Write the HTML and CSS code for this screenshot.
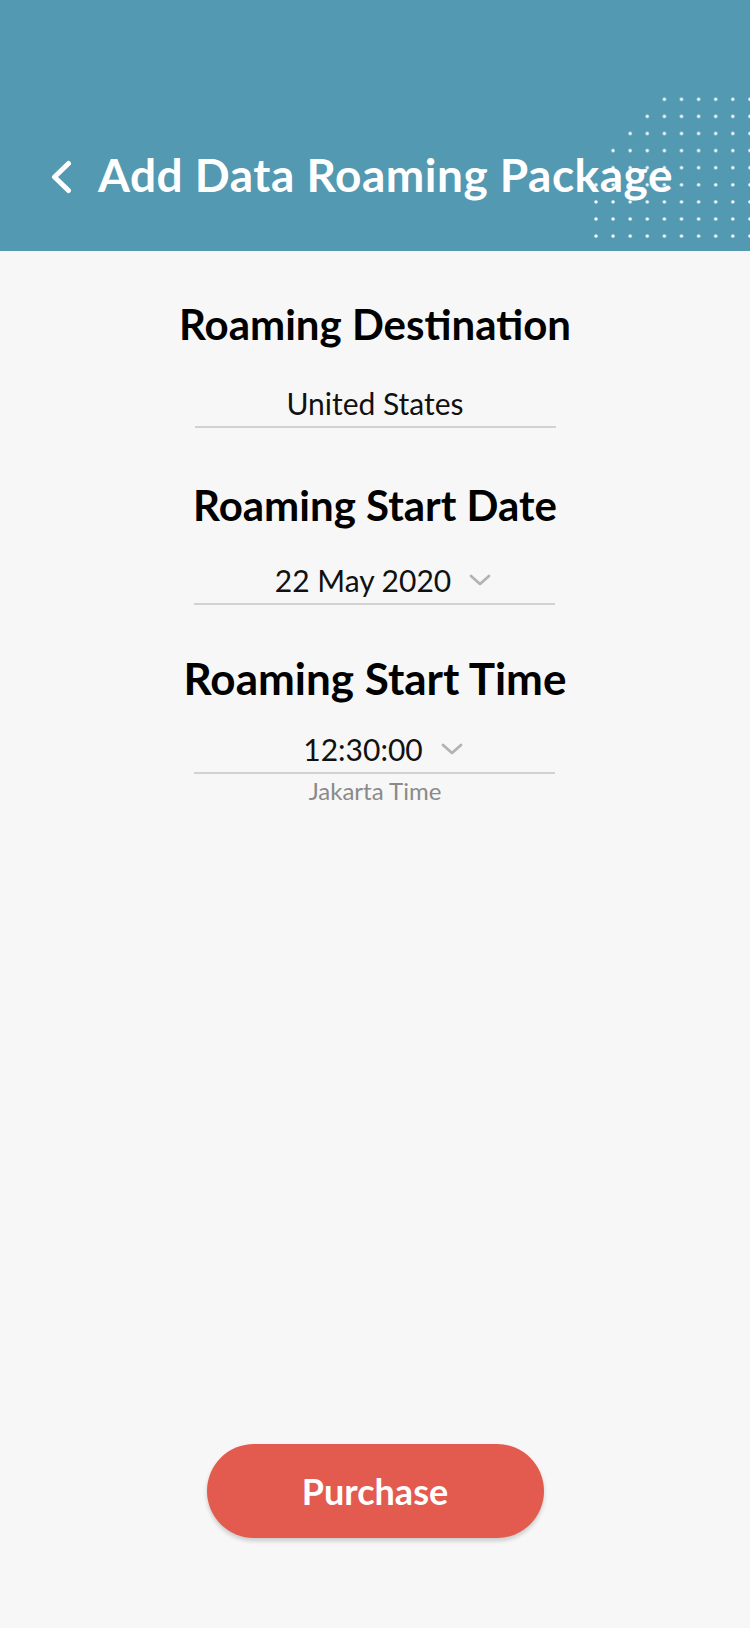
FILE: index.html
```html
<!DOCTYPE html>
<html lang="en">
<head>
<meta charset="utf-8">
<title>Add Data Roaming Package</title>
<link rel="stylesheet" href="styles.css">
</head>
<body>
<div class="page">
  <header class="header">
    <svg class="dots" viewBox="0 0 750 251" width="750" height="251" aria-hidden="true">
      <defs>
        <pattern id="dotgrid" x="587.45" y="90.75" width="17.1" height="17.1" patternUnits="userSpaceOnUse">
          <circle cx="8.55" cy="8.55" r="1.7" fill="#ffffff"/>
        </pattern>
      </defs>
      <polygon fill="url(#dotgrid)" points="655.85,90.75 752,90.75 752,244.65 587.45,244.65 587.45,176.25 604.55,176.25 604.55,142.05 621.65,142.05 621.65,124.95 638.75,124.95 638.75,107.85 655.85,107.85"/>
    </svg>
    <div class="title-row">
      <svg class="back" viewBox="0 0 22 34" width="22" height="34" aria-hidden="true">
        <polyline points="18.5,3.5 4.5,17 18.5,30.5" fill="none" stroke="#ffffff" stroke-width="5" stroke-linecap="round" stroke-linejoin="round"/>
      </svg>
      <h1 class="title">Add Data Roaming Package</h1>
    </div>
  </header>

  <main class="content">
    <section class="field field-dest">
      <h2 class="label">Roaming Destination</h2>
      <div class="value-box">
        <span class="value">United States</span>
      </div>
    </section>

    <section class="field field-date">
      <h2 class="label">Roaming Start Date</h2>
      <div class="value-box value-box--select">
        <span class="value">22 May 2020</span>
        <svg class="caret" viewBox="0 0 22 12" width="22" height="12" aria-hidden="true">
          <polyline points="2,2 11,10 20,2" fill="none" stroke="#b3b3b3" stroke-width="2.8" stroke-linecap="round" stroke-linejoin="round"/>
        </svg>
      </div>
    </section>

    <section class="field field-time">
      <h2 class="label">Roaming Start Time</h2>
      <div class="value-box value-box--select">
        <span class="value">12:30:00</span>
        <svg class="caret" viewBox="0 0 22 12" width="22" height="12" aria-hidden="true">
          <polyline points="2,2 11,10 20,2" fill="none" stroke="#b3b3b3" stroke-width="2.8" stroke-linecap="round" stroke-linejoin="round"/>
        </svg>
      </div>
      <p class="note">Jakarta Time</p>
    </section>
  </main>

  <div class="actions">
    <button class="purchase" type="button">Purchase</button>
  </div>
</div>
</body>
</html>
```
FILE: styles.css
```css
* {
  box-sizing: border-box;
}

html, body {
  margin: 0;
  padding: 0;
}

body {
  background: #f7f7f7;
  font-family: Lato, "Noto Sans", "Liberation Sans", sans-serif;
  color: #000;
}

.page {
  min-height: 1628px;
  display: flex;
  flex-direction: column;
}

.header {
  position: relative;
  height: 251px;
  background: #5399b1;
  overflow: hidden;
  padding-top: 147px;
  padding-left: 50px;
}

.dots {
  position: absolute;
  left: 0;
  top: 0;
}

.title-row {
  position: relative;
  display: flex;
  align-items: center;
  gap: 26px;
}

.back {
  flex: none;
  margin-top: 4px;
}

.title {
  margin: 0;
  font-size: 46px;
  line-height: 55px;
  font-weight: 700;
  letter-spacing: 0.5px;
  color: #fff;
  white-space: nowrap;
}

.content {
  flex: 1;
  display: flex;
  flex-direction: column;
  align-items: center;
}

.field {
  display: flex;
  flex-direction: column;
  align-items: center;
}

.label {
  margin: 0;
  font-size: 42px;
  line-height: 1.2;
  font-weight: 700;
  color: #000;
}

.value-box {
  width: 361px;
  display: flex;
  justify-content: center;
  align-items: center;
  gap: 18px;
  padding-bottom: 5.5px;
  border-bottom: 2px solid #d2d2d2;
}

.value-box--select {
  padding-left: 16px;
}

.value {
  font-size: 30px;
  line-height: 36px;
  color: #111;
}

.caret {
  flex: none;
  margin-top: 1px;
}

.field-dest {
  margin-top: 47.5px;
}

.field-dest .value-box {
  margin-top: 36px;
}

.field-date {
  margin-top: 51.5px;
}

.field-date .value-box {
  margin-top: 31.5px;
}

.field-time {
  margin-top: 46.5px;
}

.field-time .label {
  font-size: 44px;
}

.field-time .value-box {
  margin-top: 26px;
}

.note {
  margin: 2px 0 0;
  font-size: 24px;
  line-height: 29px;
  color: #8a8a8a;
}

.actions {
  display: flex;
  justify-content: center;
  padding-bottom: 90px;
}

.purchase {
  width: 337px;
  height: 94px;
  border: none;
  border-radius: 47px;
  background: #e35a4f;
  box-shadow: 0 3px 4px rgba(0, 0, 0, 0.18);
  color: #fff;
  font-family: Lato, "Noto Sans", "Liberation Sans", sans-serif;
  font-size: 36px;
  font-weight: 700;
  padding: 0;
}
```
